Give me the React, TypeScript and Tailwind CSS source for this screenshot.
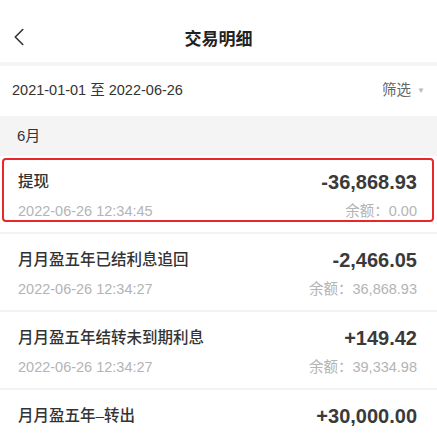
import { ChevronLeft } from "lucide-react";

type Item = {
  title: string;
  amount: string;
  time?: string;
  balance?: string;
  marked?: boolean;
};

const items: Item[] = [
  { title: "提现", amount: "-36,868.93", time: "2022-06-26 12:34:45", balance: "0.00", marked: true },
  { title: "月月盈五年已结利息追回", amount: "-2,466.05", time: "2022-06-26 12:34:27", balance: "36,868.93" },
  { title: "月月盈五年结转未到期利息", amount: "+149.42", time: "2022-06-26 12:34:27", balance: "39,334.98" },
  { title: "月月盈五年–转出", amount: "+30,000.00" },
];

const cjk = "font-['Liberation_Sans','Noto_Sans_CJK_SC',sans-serif]";

function Row({ item }: { item: Item }) {
  return (
    <div className="relative h-[78px] border-b-2 border-[#f3f3f3] pl-[18px] pr-[20px] pt-[16px]">
      <div className="flex h-[20px] items-center justify-between">
        <span className="text-[15.5px] font-medium leading-none text-[#333]">{item.title}</span>
        <span className="text-[20px] font-bold leading-none text-[#3a3a3a]">{item.amount}</span>
      </div>
      {item.time && (
        <div className="mt-[12px] flex h-[14px] items-center justify-between text-[14.5px] leading-none text-[#b4b4b4]">
          <span>{item.time}</span>
          <span>余额：{item.balance}</span>
        </div>
      )}
      {item.marked && (
        <div className="absolute left-[2px] right-[3px] top-[2px] h-[64px] rounded-[4px] border-2 border-[#e8262b]" />
      )}
    </div>
  );
}

export default function App() {
  return (
    <div className={`h-[437px] w-[437px] overflow-hidden bg-white ${cjk}`}>
      <div className="relative flex h-[62px] items-end justify-center pb-[10px]">
        <ChevronLeft className="absolute left-[4px] top-[22px] h-[30px] w-[30px] text-[#333]" strokeWidth={1.3} />
        <span className="text-[17px] font-bold text-[#222]">交易明细</span>
      </div>
      <div className="h-[4px] bg-[#f5f5f5]" />
      <div className="flex h-[50px] items-center justify-between pl-[12px] pr-[12px]">
        <span className="text-[14.5px] text-[#333]">2021-01-01 至 2022-06-26</span>
        <span className="flex items-center gap-[6px] text-[14.5px] text-[#666]">
          筛选
          <span className="text-[8px] text-[#bbb]">▼</span>
        </span>
      </div>
      <div className="flex h-[40px] items-center bg-[#f4f4f4] pl-[17px] text-[15px] text-[#333]">
        6月
      </div>
      {items.map((item) => (
        <Row key={item.title} item={item} />
      ))}
    </div>
  );
}
